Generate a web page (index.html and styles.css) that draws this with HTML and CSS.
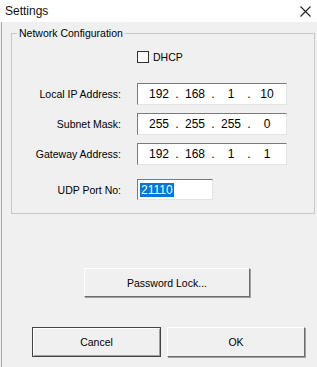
FILE: index.html
```html
<!DOCTYPE html>
<html lang="en">
<head>
    <meta charset="UTF-8">
    <title>Settings</title>
    <link rel="stylesheet" href="styles.css">
</head>
<body>
    <div class="window">
        <!-- Title bar -->
        <div class="titlebar">
            <span class="title">Settings</span>
            <svg class="close" width="11" height="11" viewBox="0 0 11 11">
                <path d="M0.5 0.5 L10.5 10.5 M10.5 0.5 L0.5 10.5" stroke="#222" stroke-width="1.1" fill="none"/>
            </svg>
        </div>

        <div class="client">
            <fieldset class="group">
                <legend>Network Configuration</legend>

                <div class="dhcp">
                    <span class="checkbox"></span>
                    <span>DHCP</span>
                </div>

                <div class="rows">
                    <div class="row">
                        <label>Local IP Address:</label>
                        <div class="ipbox">
                            <span class="oct">192</span><span class="dot">.</span>
                            <span class="oct">168</span><span class="dot">.</span>
                            <span class="oct">1</span><span class="dot">.</span>
                            <span class="oct">10</span>
                        </div>
                    </div>
                    <div class="row">
                        <label>Subnet Mask:</label>
                        <div class="ipbox">
                            <span class="oct">255</span><span class="dot">.</span>
                            <span class="oct">255</span><span class="dot">.</span>
                            <span class="oct">255</span><span class="dot">.</span>
                            <span class="oct">0</span>
                        </div>
                    </div>
                    <div class="row">
                        <label>Gateway Address:</label>
                        <div class="ipbox">
                            <span class="oct">192</span><span class="dot">.</span>
                            <span class="oct">168</span><span class="dot">.</span>
                            <span class="oct">1</span><span class="dot">.</span>
                            <span class="oct">1</span>
                        </div>
                    </div>
                    <div class="row row-port">
                        <label>UDP Port No:</label>
                        <div class="portbox"><span class="sel">21110</span></div>
                    </div>
                </div>
            </fieldset>

            <div class="lock-row">
                <button class="btn btn-lock">Password Lock...</button>
            </div>

            <div class="actions">
                <button class="btn btn-cancel">Cancel</button>
                <button class="btn btn-ok">OK</button>
            </div>
        </div>
    </div>
</body>
</html>
```

FILE: styles.css
```css
/* Page */
body {
    margin: 0;
    font-family: 'Liberation Sans', Arial, sans-serif;
    font-size: 10.5px;
    color: #000;
    background: #f0f0f0;
}

.window {
    width: 317px;
    height: 367px;
    overflow: hidden;
    display: flex;
    flex-direction: column;
}

/* Title bar */
.titlebar {
    height: 22px;
    background: #fff;
    display: flex;
    align-items: center;
    justify-content: space-between;
    padding: 0 5px 0 5px;
    flex-shrink: 0;
}

.title {
    font-size: 12px;
    color: #111;
}

.close {
    margin-right: 1px;
}

/* Dialog body */
.client {
    flex: 1;
    border-left: 1px solid #a9a9a9;
    margin-left: 1px;
    padding: 0 2px 0 9px;
}

.group {
    margin: 5px 0 0 0;
    padding: 0 0 14px 0;
    border: 1px solid #c8c8c8;
    height: 187px;
    box-sizing: border-box;
}

.group legend {
    margin-left: 5px;
    padding: 0 2px;
    color: #000;
}

.dhcp {
    display: flex;
    align-items: center;
    gap: 4px;
    margin: 12px 0 0 125px;
}

.checkbox {
    width: 10px;
    height: 10px;
    border: 1px solid #333;
    background: #fff;
}

/* Form rows */
.rows {
    margin-top: 20px;
    display: flex;
    flex-direction: column;
    gap: 8px;
}

.row {
    display: flex;
    align-items: center;
}

.row label {
    width: 109px;
    text-align: right;
    margin-right: 16px;
}

.row-port {
    margin-top: 6px;
}

.ipbox,
.portbox {
    height: 22px;
    box-sizing: border-box;
    background: #fff;
    border-top: 1px solid #7a7a7a;
    border-left: 1px solid #7a7a7a;
    border-right: 1px solid #e3e3e3;
    border-bottom: 1px solid #e3e3e3;
    display: flex;
    align-items: center;
}

.ipbox {
    width: 150px;
    padding-left: 8px;
    font-size: 12px;
}

.oct {
    width: 26px;
    text-align: center;
}

.dot {
    width: 10px;
    text-align: center;
}

.portbox {
    width: 76px;
    height: 21px;
    padding-left: 2px;
    font-size: 12px;
}

.sel {
    background: #0078d7;
    color: #fff;
    padding: 0 1px;
}

/* Buttons */
.btn {
    font-family: 'Liberation Sans', Arial, sans-serif;
    font-size: 10.5px;
    color: #000;
    background: #f0f0f0;
    border-top: 1px solid #fff;
    border-left: 1px solid #fff;
    border-right: 1px solid #6d6d6d;
    border-bottom: 1px solid #6d6d6d;
    box-shadow: 1px 1px 0 #a0a0a0;
    padding: 0;
}

.lock-row {
    margin-top: 54px;
    padding-left: 73px;
}

.btn-lock {
    width: 166px;
    height: 29px;
}

.actions {
    margin-top: 30px;
    padding-left: 21px;
    display: flex;
    gap: 6px;
}

.btn-cancel {
    width: 129px;
    height: 30px;
    border: 1px solid #444;
    box-shadow: inset 1px 1px 0 #fff, inset -1px -1px 0 #a0a0a0;
}

.btn-ok {
    width: 138px;
    height: 30px;
}
```
